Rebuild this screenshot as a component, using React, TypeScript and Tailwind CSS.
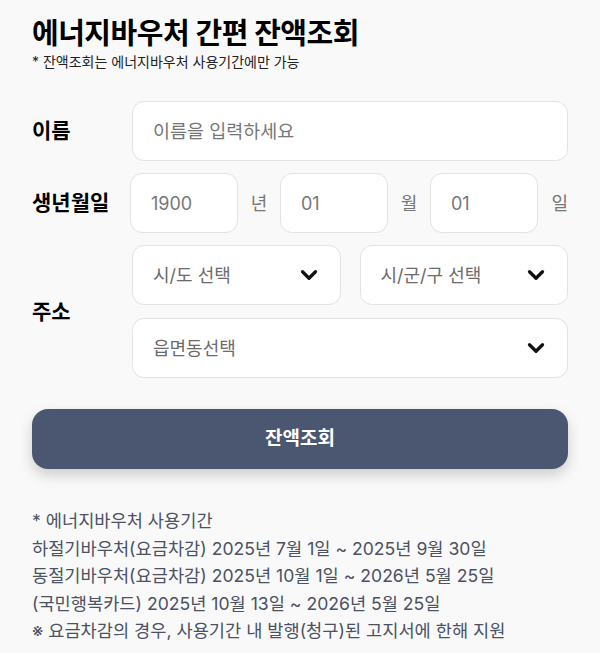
import React, { useState } from 'react';
import { ChevronDown } from 'lucide-react';

const FONT = "font-['Inter','Noto_Sans_CJK_KR',sans-serif]";

const SelectBox: React.FC<{ label: string; className?: string }> = ({ label, className }) => (
  <div className={`flex items-center justify-between h-[60px] pl-5 pr-[18px] bg-white border border-[#e2e2e2] rounded-xl ${className ?? ''}`}>
    <span className="text-[18px] text-[#6b6b6b]">{label}</span>
    <ChevronDown className="w-[26px] h-[26px] text-[#111]" strokeWidth={3} />
  </div>
);

const DateInput: React.FC<{ value: string; unit: string; onChange: (v: string) => void }> = ({ value, unit, onChange }) => (
  <div className="flex items-center gap-0">
    <input
      value={value}
      onChange={e => onChange(e.target.value)}
      className="w-[108px] h-[60px] px-5 bg-white border border-[#e2e2e2] rounded-xl text-[18px] text-[#777] outline-none"
    />
    <span className="w-[42px] text-center text-[18px] text-[#777]">{unit}</span>
  </div>
);

export default function App() {
  const [name, setName] = useState('');
  const [year, setYear] = useState('1900');
  const [month, setMonth] = useState('01');
  const [day, setDay] = useState('01');

  return (
    <div className={`min-h-[653px] bg-[#f9f9f9] px-8 pt-[14px] ${FONT}`}>
      <header>
        <h1 className="text-[29px] font-bold text-black leading-[40px] tracking-[-0.5px]">에너지바우처 간편 잔액조회</h1>
        <p className="text-[14px] text-[#222] leading-[16px]">* 잔액조회는 에너지바우처 사용기간에만 가능</p>
      </header>

      <main className="mt-[31px] flex flex-col gap-3">
        <div className="flex items-center">
          <label className="w-[100px] text-[21px] font-bold text-black">이름</label>
          <input
            value={name}
            onChange={e => setName(e.target.value)}
            placeholder="이름을 입력하세요"
            className="flex-1 h-[60px] px-5 bg-white border border-[#e2e2e2] rounded-xl text-[18.5px] placeholder:text-[#777] outline-none"
          />
        </div>

        <div className="flex items-center">
          <label className="w-[100px] text-[21px] font-bold text-black">생년월일</label>
          <div className="flex-1 flex items-center justify-between">
            <DateInput value={year} unit="년" onChange={setYear} />
            <DateInput value={month} unit="월" onChange={setMonth} />
            <div className="flex items-center">
              <input
                value={day}
                onChange={e => setDay(e.target.value)}
                className="w-[108px] h-[60px] px-5 bg-white border border-[#e2e2e2] rounded-xl text-[18px] text-[#777] outline-none"
              />
              <span className="w-[30px] text-right text-[18px] text-[#777]">일</span>
            </div>
          </div>
        </div>

        <div className="flex items-center">
          <label className="w-[100px] text-[21px] font-bold text-black">주소</label>
          <div className="flex-1 flex flex-col gap-[13px]">
            <div className="flex gap-[19px]">
              <SelectBox label="시/도 선택" className="flex-1" />
              <SelectBox label="시/군/구 선택" className="flex-1" />
            </div>
            <SelectBox label="읍면동선택" />
          </div>
        </div>

        <button className="mt-[19px] h-[60px] w-full rounded-2xl bg-[#4b5670] text-white text-[19px] font-bold shadow-[0_6px_14px_rgba(0,0,0,0.18)]">
          잔액조회
        </button>
      </main>

      <section className="mt-[38px] text-[17.6px] text-[#4a5263] leading-[27.5px]">
        <p>* 에너지바우처 사용기간</p>
        <p>하절기바우처(요금차감) 2025년 7월 1일 ~ 2025년 9월 30일</p>
        <p>동절기바우처(요금차감) 2025년 10월 1일 ~ 2026년 5월 25일</p>
        <p>(국민행복카드) 2025년 10월 13일 ~ 2026년 5월 25일</p>
        <p>※ 요금차감의 경우, 사용기간 내 발행(청구)된 고지서에 한해 지원</p>
      </section>
    </div>
  );
}
